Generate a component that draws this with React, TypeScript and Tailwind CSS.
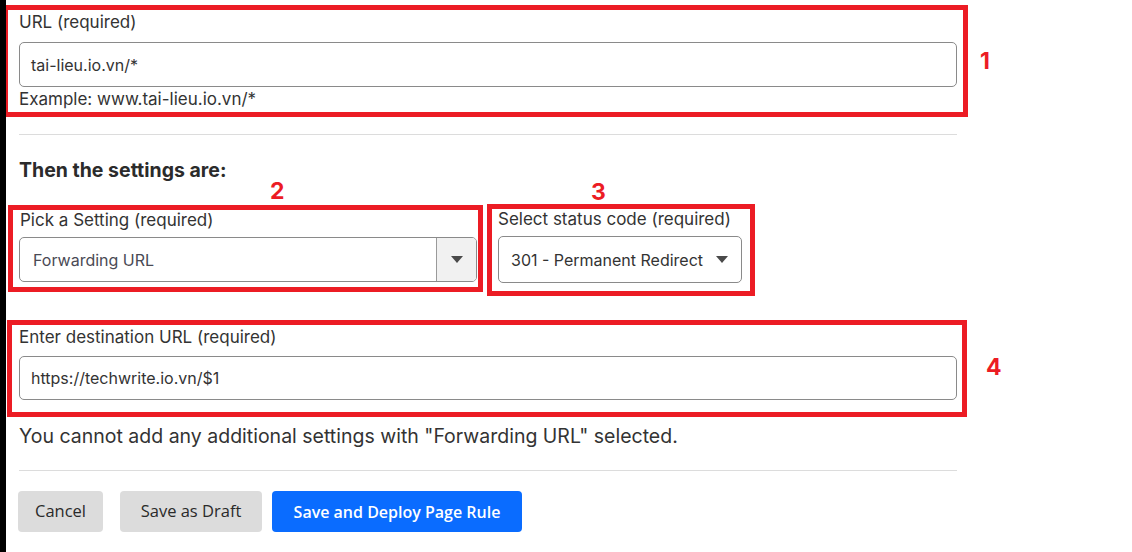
import React from "react";

const Caret = () => (
  <svg width="12" height="7" viewBox="0 0 12 7">
    <path d="M0 0 L12 0 L6 7 Z" fill="#4a4a4a" />
  </svg>
);

const Num = ({ n, className = "" }: { n: string; className?: string }) => (
  <span
    className={`text-[23px] font-bold leading-[24px] text-[#ec1c24] ${className}`}
    style={{ fontFamily: "Inter, 'Noto Sans', sans-serif" }}
  >
    {n}
  </span>
);

export default function App() {
  return (
    <div
      className="w-[1132px] h-[552px] bg-white overflow-hidden text-[#333] border-l-[6px] border-black flex flex-col"
      style={{ fontFamily: "Inter, 'Noto Sans', sans-serif" }}
    >
      {/* Section 1 */}
      <div className="flex items-center mt-[5px]">
        <div className="-ml-[3px] w-[965px] h-[112px] border-[5px] border-[#ec1c24] pl-[11px] pr-[6px] flex flex-col">
          <div className="text-[17px] leading-[24px] mb-[8px]">URL (required)</div>
          <div className="h-[45px] border border-[#8a8a8a] rounded-[5px] flex items-center px-[11px] text-[16px]">
            tai-lieu.io.vn/*
          </div>
          <div className="text-[17px] leading-[24px]">Example: www.tai-lieu.io.vn/*</div>
        </div>
        <Num n="1" className="ml-[12px]" />
      </div>

      <div className="ml-[13px] w-[938px] mt-[17px] border-t border-[#dcdcdc]" />

      <div className="ml-[13px] mt-[21px] text-[19.5px] leading-[28px] font-bold text-[#2b2b2b]">
        Then the settings are:
      </div>

      {/* Section 2 & 3 */}
      <div className="flex items-start gap-[4px] mt-[20px] ml-[2px]">
        <div className="relative mt-[1px] w-[475px] h-[87px] border-[5px] border-[#ec1c24] pl-[6px] pr-[1px] flex flex-col">
          <Num n="2" className="absolute left-[257px] -top-[31px]" />
          <div className="text-[17px] leading-[20px] mb-[7px] pl-[1px]">Pick a Setting (required)</div>
          <div className="h-[45px] border border-[#8a8a8a] rounded-[5px] flex items-stretch overflow-hidden">
            <div className="flex-1 flex items-center px-[13px] text-[16px] text-[#4a4a55]">Forwarding URL</div>
            <div className="w-[40px] bg-[#f1f1f1] border-l border-[#9a9a9a] flex items-center justify-center">
              <Caret />
            </div>
          </div>
        </div>
        <div className="relative w-[268px] h-[92px] border-[5px] border-[#ec1c24] pl-[6px] pr-[8px] flex flex-col">
          <Num n="3" className="absolute left-[99px] -top-[29px]" />
          <div className="text-[17px] leading-[20px] mb-[7px]">Select status code (required)</div>
          <div className="h-[47px] border border-[#8a8a8a] rounded-[5px] flex items-center justify-between pl-[12px] pr-[13px] text-[16px]">
            <span>301 - Permanent Redirect</span>
            <Caret />
          </div>
        </div>
      </div>

      {/* Section 4 */}
      <div className="flex items-center mt-[24px] ml-[1px]">
        <div className="w-[960px] h-[97px] border-[5px] border-[#ec1c24] pl-[7px] pr-[5px] flex flex-col">
          <div className="text-[17px] leading-[24px] mb-[7px]">Enter destination URL (required)</div>
          <div className="h-[44px] border border-[#8a8a8a] rounded-[5px] flex items-center px-[11px] text-[16px]">
            https://techwrite.io.vn/$1
          </div>
        </div>
        <Num n="4" className="ml-[19px] -mt-[4px]" />
      </div>

      <div className="ml-[13px] mt-[5px] text-[19.5px] leading-[28px]">
        You cannot add any additional settings with "Forwarding URL" selected.
      </div>

      <div className="ml-[13px] w-[938px] mt-[20px] border-t border-[#dcdcdc]" />

      <div
        className="ml-[12px] mt-[20px] flex gap-[17px] text-[16.5px]"
        style={{ fontFamily: "'Open Sans', 'Noto Sans', sans-serif" }}
      >
        <button className="h-[41px] w-[85px] rounded-[4px] bg-[#dcdcdc] text-[#2a2a2a]">Cancel</button>
        <div className="flex gap-[10px]">
          <button className="h-[41px] w-[142px] rounded-[4px] bg-[#dcdcdc] text-[#2a2a2a]">Save as Draft</button>
          <button className="h-[41px] w-[250px] rounded-[4px] bg-[#0a6cff] text-white font-semibold text-[16px]">
            Save and Deploy Page Rule
          </button>
        </div>
      </div>
    </div>
  );
}
